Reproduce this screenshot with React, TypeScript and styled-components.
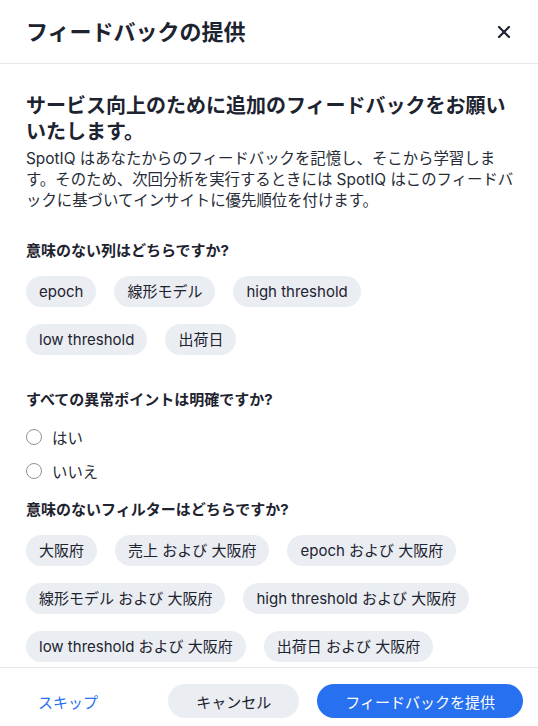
import styled, { createGlobalStyle } from "styled-components";

const GlobalStyle = createGlobalStyle`
  html, body {
    margin: 0;
    padding: 0;
    background: #ffffff;
  }
  body {
    font-family: "Inter", "Noto Sans CJK JP", sans-serif;
    color: #1d232f;
  }
  * {
    box-sizing: border-box;
  }
`;

const Dialog = styled.div`
  width: 538px;
  height: 726px;
  display: flex;
  flex-direction: column;
  background: #fff;
  overflow: hidden;
`;

const Header = styled.div`
  height: 64px;
  flex-shrink: 0;
  display: flex;
  align-items: center;
  justify-content: space-between;
  padding: 0 26px 0 26px;
  border-bottom: 1px solid #e6e8ec;
`;

const Title = styled.h1`
  margin: 0;
  font-size: 22px;
  font-weight: 700;
  line-height: 28px;
  color: #1d232f;
`;

const CloseButton = styled.button`
  border: none;
  background: none;
  padding: 0;
  width: 16px;
  height: 16px;
  display: flex;
  align-items: center;
  justify-content: center;
  cursor: pointer;
`;

const Body = styled.div`
  flex: 1;
  overflow: hidden;
  padding: 29px 20px 0 26px;
`;

const Heading = styled.h2`
  margin: 0;
  font-size: 20px;
  font-weight: 700;
  line-height: 26px;
  color: #1d232f;
`;

const Description = styled.p`
  margin: 3px 0 0 0;
  font-size: 15.4px;
  line-height: 21px;
  color: #262b36;
`;

const Question = styled.div<{ $top: number }>`
  margin-top: ${(p) => p.$top}px;
  font-size: 15px;
  font-weight: 700;
  line-height: 20px;
  color: #1d232f;
`;

const ChipList = styled.div`
  display: flex;
  flex-wrap: wrap;
  gap: 17px 18px;
  margin-top: 15px;
  padding-right: 28px;
`;

const Chip = styled.button`
  height: 31px;
  padding: 0 13px;
  border: none;
  border-radius: 16px;
  background: #eaedf2;
  color: #1d232f;
  font-family: inherit;
  font-size: 15px;
  line-height: 31px;
  white-space: nowrap;
  cursor: pointer;
`;

const RadioList = styled.div`
  display: flex;
  flex-direction: column;
  gap: 10px;
  margin-top: 15px;
`;

const RadioRow = styled.label`
  display: flex;
  align-items: center;
  gap: 10px;
  height: 24px;
  font-size: 15.4px;
  color: #262b36;
  cursor: pointer;
`;

const RadioCircle = styled.span`
  width: 16px;
  height: 16px;
  border-radius: 50%;
  border: 1.5px solid #8d929c;
  background: #fff;
  flex-shrink: 0;
`;

const Footer = styled.div`
  flex-shrink: 0;
  height: 59px;
  display: flex;
  align-items: flex-start;
  justify-content: space-between;
  padding: 16px 15px 0 26px;
  border-top: 1px solid #e6e8ec;
`;

const SkipLink = styled.button`
  border: none;
  background: none;
  height: 34px;
  padding: 0 12px;
  font-family: inherit;
  font-size: 15px;
  color: #2770ef;
  cursor: pointer;
`;

const Actions = styled.div`
  display: flex;
  gap: 18px;
`;

const ActionButton = styled.button<{ $primary?: boolean }>`
  height: 34px;
  padding: 0 28px;
  border: none;
  border-radius: 17px;
  font-family: inherit;
  font-size: 15px;
  background: ${(p) => (p.$primary ? "#2770ef" : "#eaedf2")};
  color: ${(p) => (p.$primary ? "#ffffff" : "#1d232f")};
  cursor: pointer;
`;

const columns = ["epoch", "線形モデル", "high threshold", "low threshold", "出荷日"];
const filters = [
  "大阪府",
  "売上 および 大阪府",
  "epoch および 大阪府",
  "線形モデル および 大阪府",
  "high threshold および 大阪府",
  "low threshold および 大阪府",
  "出荷日 および 大阪府",
];

export default function App() {
  return (
    <>
      <GlobalStyle />
      <Dialog>
        <Header>
          <Title>フィードバックの提供</Title>
          <CloseButton aria-label="閉じる">
            <svg width="12" height="12" viewBox="0 0 12 12">
              <path d="M1 1 L11 11 M11 1 L1 11" stroke="#1d232f" strokeWidth="2.2" strokeLinecap="square" />
            </svg>
          </CloseButton>
        </Header>
        <Body>
          <Heading>サービス向上のために追加のフィードバックをお願いいたします。</Heading>
          <Description>
            SpotIQ はあなたからのフィードバックを記憶し、そこから学習します。そのため、次回分析を実行するときには SpotIQ はこのフィードバックに基づいてインサイトに優先順位を付けます。
          </Description>

          <Question $top={30}>意味のない列はどちらですか?</Question>
          <ChipList>
            {columns.map((c) => (
              <Chip key={c}>{c}</Chip>
            ))}
          </ChipList>

          <Question $top={35}>すべての異常ポイントは明確ですか?</Question>
          <RadioList>
            <RadioRow>
              <RadioCircle />
              はい
            </RadioRow>
            <RadioRow>
              <RadioCircle />
              いいえ
            </RadioRow>
          </RadioList>

          <Question $top={17}>意味のないフィルターはどちらですか?</Question>
          <ChipList>
            {filters.map((f) => (
              <Chip key={f}>{f}</Chip>
            ))}
          </ChipList>
        </Body>
        <Footer>
          <SkipLink>スキップ</SkipLink>
          <Actions>
            <ActionButton>キャンセル</ActionButton>
            <ActionButton $primary>フィードバックを提供</ActionButton>
          </Actions>
        </Footer>
      </Dialog>
    </>
  );
}
